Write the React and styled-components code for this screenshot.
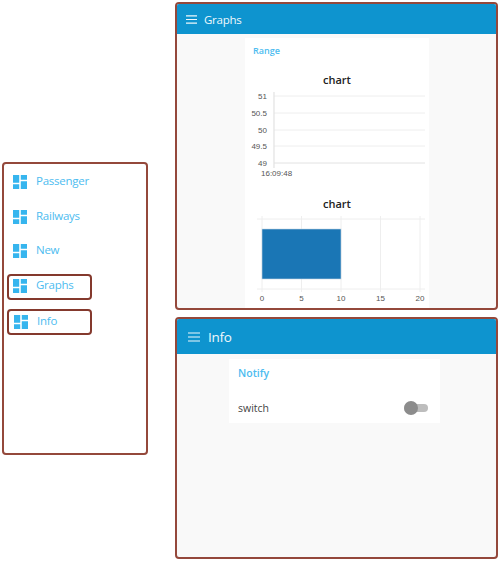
import styled, { createGlobalStyle } from "styled-components";

const Global = createGlobalStyle`
  html, body {
    margin: 0;
    padding: 0;
    background: #fff;
    overflow: hidden;
  }
  * {
    box-sizing: border-box;
  }
`;

const Page = styled.div`
  width: 500px;
  height: 561px;
  display: flex;
  gap: 27px;
  padding: 2px;
  font-family: "Open Sans", "Noto Sans", sans-serif;
`;

const Sidebar = styled.nav`
  width: 146px;
  height: 293px;
  margin-top: 160px;
  padding: 5px 3px;
  border: 2px solid #94483b;
  border-radius: 4px;
  display: flex;
  flex-direction: column;
  gap: 9px;
`;

const NavItem = styled.div`
  height: 26px;
  width: 85px;
  flex: none;
  display: flex;
  align-items: center;
  gap: 9px;
  padding-left: ${(p) => p.$indent}px;
  padding-bottom: ${(p) => p.$lift}px;
  border: 2px solid ${(p) => (p.$boxed ? "#84392d" : "transparent")};
  border-radius: 4px;
  color: #4dbcf0;
  font-size: 11.5px;
  letter-spacing: -0.25px;

  svg {
    flex: none;
  }
`;

const NavLabel = styled.span`
  padding-bottom: 3px;
`;

const Panels = styled.div`
  width: 323px;
  display: flex;
  flex-direction: column;
  gap: 7px;
`;

const Panel = styled.section`
  height: ${(p) => p.$height}px;
  border: 2px solid #94483b;
  border-radius: 4px;
  background: #f9f9f9;
  display: flex;
  flex-direction: column;
  overflow: hidden;
`;

const Header = styled.header`
  height: ${(p) => p.$height}px;
  flex: none;
  background: #0e94cf;
  color: #eef8fc;
  display: flex;
  align-items: center;
  gap: ${(p) => p.$gap}px;
  padding-left: ${(p) => p.$pad}px;
  font-size: ${(p) => p.$size}px;
  letter-spacing: -0.25px;
`;

const Card = styled.div`
  width: ${(p) => p.$width}px;
  margin: ${(p) => p.$gapTop}px 0 0 ${(p) => p.$left}px;
  background: #fff;
  flex: ${(p) => (p.$fill ? 1 : "none")};
  height: ${(p) => (p.$fill ? "auto" : `${p.$height}px`)};
  padding: 0 8px 0 ${(p) => p.$padLeft}px;
`;

const GroupTitle = styled.div`
  color: #4dbcf0;
  font-size: ${(p) => p.$size}px;
  font-weight: 600;
  padding-top: ${(p) => p.$top}px;
  line-height: 14px;
`;

const ChartTitle = styled.div`
  text-align: center;
  font-size: 11px;
  font-weight: 600;
  color: #222;
  line-height: 14px;
  margin-top: ${(p) => p.$top}px;
`;

const ChartSvg = styled.svg`
  display: block;
  margin-top: ${(p) => p.$top}px;
  margin-left: -8px;
`;

const SwitchRow = styled.div`
  display: flex;
  align-items: center;
  justify-content: space-between;
  margin-top: 21px;
  padding-right: 4px;
  font-size: 10.5px;
  color: #444;
`;

const Track = styled.div`
  position: relative;
  width: 24px;
  height: 8px;
  border-radius: 4px;
  background: #bdbdbd;
`;

const Thumb = styled.div`
  position: absolute;
  left: 0;
  top: -3px;
  width: 14px;
  height: 14px;
  border-radius: 50%;
  background: #8c8c8c;
`;

const AxisText = styled.text`
  font-family: "Liberation Sans", sans-serif;
  font-size: 8px;
  fill: #555;
`;

const navItems = [
  { label: "Passenger", indent: 4, lift: 1 },
  { label: "Railways", indent: 4, lift: 1 },
  { label: "New", indent: 4, lift: 2 },
  { label: "Graphs", indent: 4, lift: 2, boxed: true },
  { label: "Info", indent: 5, lift: 0, boxed: true },
];

function DashboardIcon() {
  return (
    <svg width="14" height="14" viewBox="3 3 18 18" fill="#36b5ee">
      <path d="M3 13h8V3H3v10zm0 8h8v-6H3v6zm10 0h8V11h-8v10zm0-18v6h8V3h-8z" />
    </svg>
  );
}

function MenuIcon({ size }) {
  return (
    <svg width={size} height={size} viewBox="0 0 12 12" stroke="#eef8fc" strokeWidth="1.2">
      <path d="M0 2h12M0 6h12M0 10h12" />
    </svg>
  );
}

function LineChart() {
  const rows = [
    ["51", 96],
    ["50.5", 113],
    ["50", 130],
    ["49.5", 146],
    ["49", 163],
  ];
  return (
    <ChartSvg $top={1} width="184" height="90" viewBox="245 88 184 90">
      {rows.map(([label, y]) => (
        <g key={label}>
          <line x1="274" x2="425" y1={y} y2={y} stroke={y === 163 ? "#e2e2e2" : "#eeeeee"} strokeWidth="1" />
          <AxisText x="267" y={y + 3} textAnchor="end">
            {label}
          </AxisText>
        </g>
      ))}
      <line x1="274" x2="274" y1="92" y2="168" stroke="#e2e2e2" strokeWidth="1.2" />
      <AxisText x="261" y="176">16:09:48</AxisText>
    </ChartSvg>
  );
}

function BarChart() {
  const ticks = [0, 5, 10, 15, 20];
  return (
    <ChartSvg $top={0} width="184" height="97" viewBox="245 211 184 97">
      <line x1="257" x2="425" y1="219" y2="219" stroke="#eeeeee" />
      <line x1="257" x2="425" y1="289" y2="289" stroke="#eeeeee" />
      {ticks.map((t, i) => (
        <g key={t}>
          <line x1={262 + i * 39.5} x2={262 + i * 39.5} y1="216" y2="292" stroke="#eeeeee" />
          <AxisText x={262 + i * 39.5} y="301" textAnchor="middle">
            {t}
          </AxisText>
        </g>
      ))}
      <rect x="262" y="229" width="79" height="50" fill="#1a76b5" stroke="#c5d6e3" strokeWidth="0.6" />
    </ChartSvg>
  );
}

export default function App() {
  return (
    <Page>
      <Global />
      <Sidebar>
        {navItems.map((item) => (
          <NavItem key={item.label} $boxed={item.boxed} $indent={item.indent} $lift={item.lift}>
            <DashboardIcon />
            <NavLabel>{item.label}</NavLabel>
          </NavItem>
        ))}
      </Sidebar>
      <Panels>
        <Panel $height={308}>
          <Header $height={30} $gap={7} $pad={9} $size={11.5}>
            <MenuIcon size={11} />
            Graphs
          </Header>
          <Card $width={184} $left={68} $gapTop={4} $padLeft={8} $fill>
            <GroupTitle $size={9} $top={6}>Range</GroupTitle>
            <ChartTitle $top={15}>chart</ChartTitle>
            <LineChart />
            <ChartTitle $top={19}>chart</ChartTitle>
            <BarChart />
          </Card>
        </Panel>
        <Panel $height={242}>
          <Header $height={35} $gap={8} $pad={11} $size={13.5}>
            <MenuIcon size={12} />
            Info
          </Header>
          <Card $width={211} $left={52} $gapTop={5} $padLeft={9} $height={64}>
            <GroupTitle $size={10.5} $top={7}>Notify</GroupTitle>
            <SwitchRow>
              switch
              <Track>
                <Thumb />
              </Track>
            </SwitchRow>
          </Card>
        </Panel>
      </Panels>
    </Page>
  );
}
